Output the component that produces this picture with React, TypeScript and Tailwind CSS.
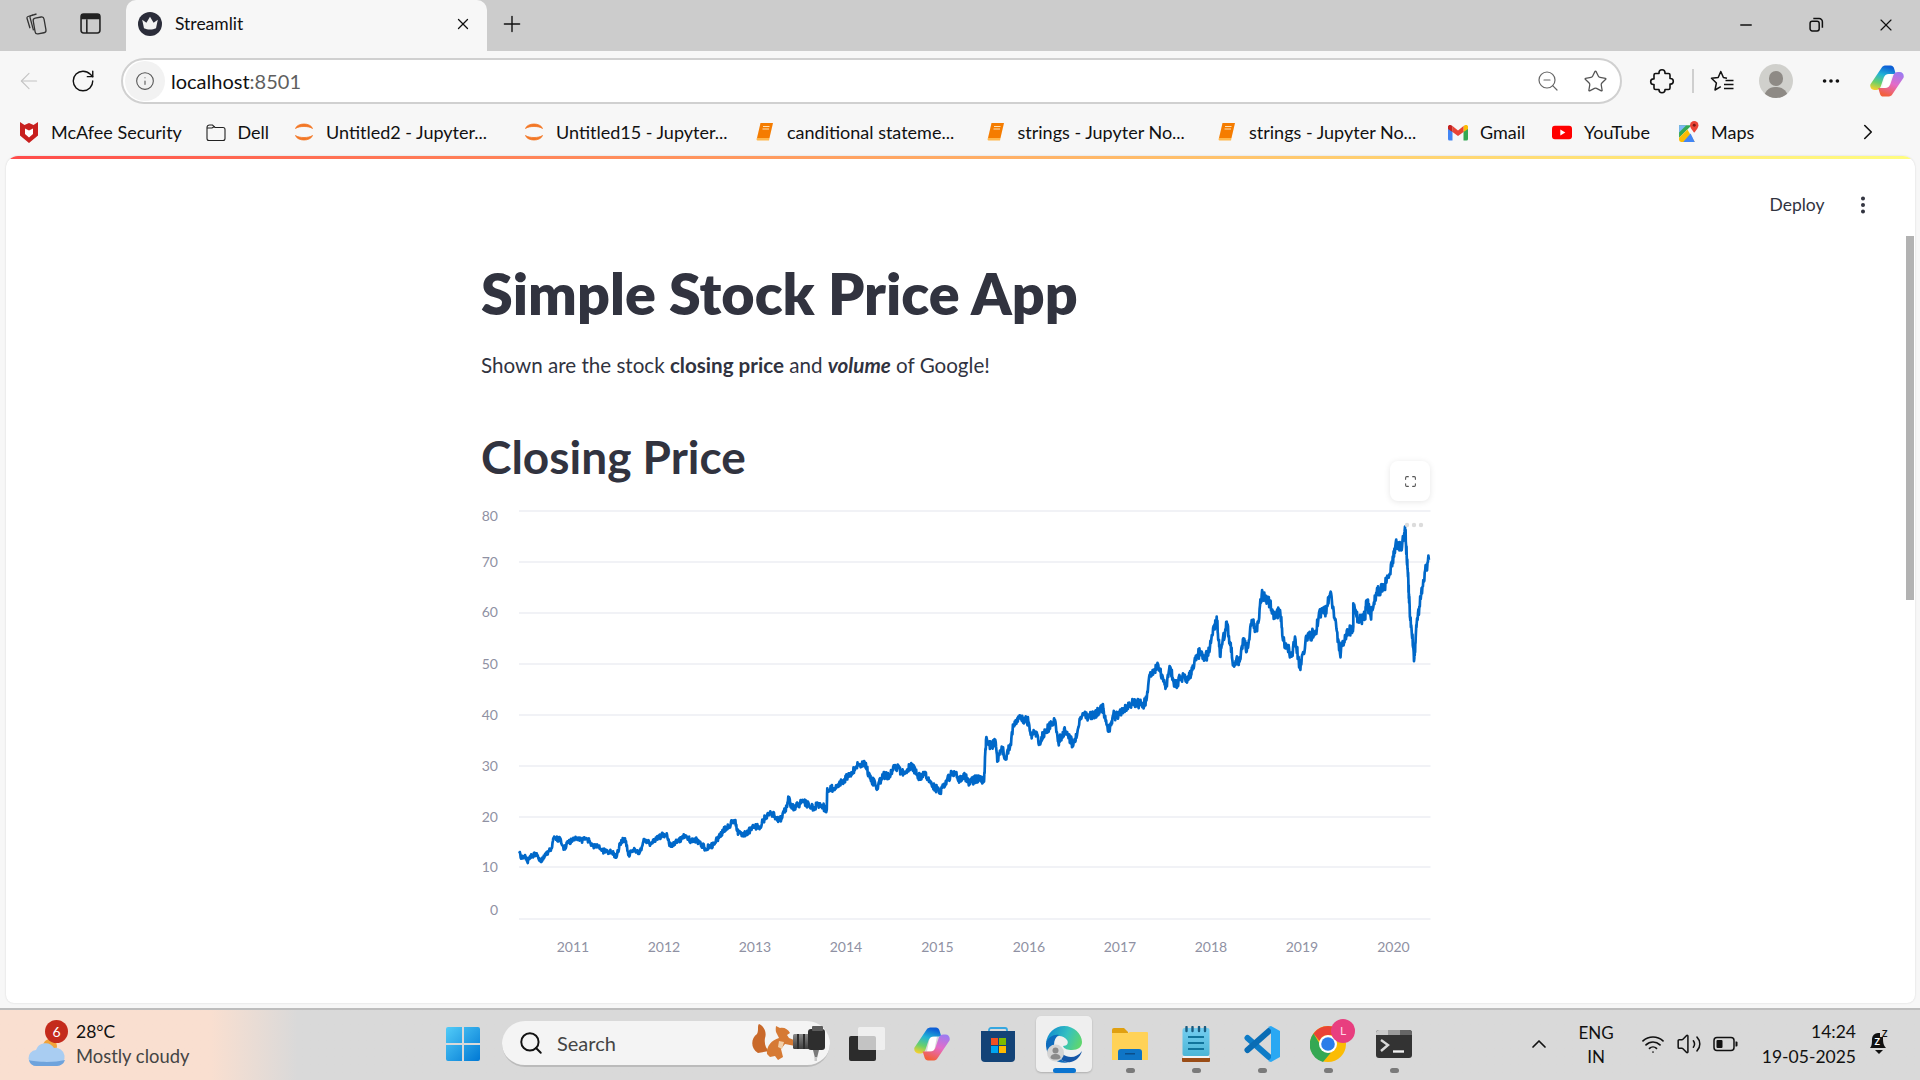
import { ArrowLeft, RotateCw, Info, ZoomOut, Star, MoreHorizontal, ChevronRight, ChevronUp, Search, Wifi, Volume2, X, Plus, Minus, MoreVertical, Maximize } from 'lucide-react';

const bodyFont = "font-['Lato','Liberation_Sans',sans-serif]";

// traced from the reference crops
const leftTrace = [
  [148, 1120], [155, 1135], [165, 1125], [172, 1145], [185, 1128], [200, 1120], [212, 1145], [228, 1125], [245, 1105], [250, 1075],
  [270, 1078], [282, 1105], [295, 1088], [318, 1075], [335, 1082], [350, 1075], [370, 1098], [385, 1100], [395, 1112], [420, 1115],
  [440, 1130], [450, 1090], [465, 1075], [475, 1125], [490, 1110], [510, 1115], [520, 1085], [545, 1090], [560, 1075], [590, 1060],
  [600, 1095], [625, 1080], [645, 1068], [660, 1080], [680, 1080], [705, 1105], [730, 1095], [760, 1052], [795, 1020], [800, 1050],
  [815, 1068], [850, 1042], [870, 1040], [885, 1012], [905, 1000], [930, 1020], [950, 980], [955, 950], [965, 985], [1000, 965],
  [1030, 985], [1050, 970], [1070, 990], [1072, 925], [1090, 925], [1140, 885], [1165, 855], [1185, 850], [1200, 895], [1222, 920],
  [1240, 885], [1255, 890], [1275, 855], [1295, 880], [1325, 855], [1345, 890], [1365, 885], [1385, 915], [1410, 935], [1430, 900],
  [1450, 875], [1470, 900],
];
const rightTrace = [
  [0, 960], [12, 945], [25, 965], [60, 955], [72, 965], [78, 840], [95, 860], [105, 840], [112, 905], [125, 860], [135, 895], [150, 860],
  [160, 795], [180, 775], [205, 785], [215, 835], [225, 815], [238, 845], [255, 815], [285, 780], [295, 845], [315, 810], [340, 855],
  [360, 780], [372, 765], [395, 770], [430, 745], [445, 815], [460, 765], [475, 770], [490, 745], [520, 725], [540, 735], [555, 730],
  [570, 645], [595, 615], [618, 680], [630, 620], [645, 680], [665, 650], [685, 660], [710, 585], [725, 575], [735, 600], [750, 560],
  [770, 470], [780, 590], [800, 485], [820, 610], [840, 600], [850, 535], [860, 575], [875, 480], [890, 510], [905, 405], [925, 420],
  [945, 475], [960, 450], [970, 540], [995, 590], [1005, 530], [1020, 625], [1040, 530], [1065, 520], [1085, 445], [1095, 460],
  [1112, 395], [1125, 480], [1140, 580], [1155, 525], [1180, 500], [1180, 430], [1195, 480], [1215, 470], [1220, 420], [1232, 470],
  [1250, 400], [1270, 385], [1290, 340], [1310, 250], [1325, 270], [1335, 200], [1343, 330], [1350, 470], [1363, 595], [1370, 490],
  [1378, 440], [1390, 360], [1408, 290],
];

function buildPricePath() {
  const pts: number[][] = [
    ...leftTrace.map(([x, y]) => [470 + x / 3 - 519, 480 + y / 3 - 500]),
    ...rightTrace.map(([x, y]) => [960 + x / 3 - 519, 460 + y / 3 - 500]),
  ];
  // seeded wobble so the line reads as daily prices
  let seed = 17;
  const rnd = () => {
    seed = (seed * 16807) % 2147483647;
    return seed / 2147483647 - 0.5;
  };
  let d = '';
  for (let i = 0; i < pts.length - 1; i++) {
    const [x0, y0] = pts[i];
    const [x1, y1] = pts[i + 1];
    const steps = Math.max(1, Math.round(Math.max(Math.abs(x1 - x0) / 0.45, Math.abs(y1 - y0) / 3)));
    for (let s = 0; s < steps; s++) {
      const t = s / steps;
      const amp = 4.5 + (Math.max(x0, 0) / 911) * 8;
      const x = x0 + (x1 - x0) * t;
      const y = y0 + (y1 - y0) * t + (s === 0 ? 0 : rnd() * amp);
      d += `${d ? 'L' : 'M'}${x.toFixed(1)} ${y.toFixed(1)}`;
    }
  }
  return d;
}

const gridTicks = [
  { label: '80', y: 11, labelY: 17 },
  { label: '70', y: 62, labelY: 63 },
  { label: '60', y: 113, labelY: 113 },
  { label: '50', y: 164, labelY: 164.5 },
  { label: '40', y: 215, labelY: 215.5 },
  { label: '30', y: 266, labelY: 266.5 },
  { label: '20', y: 317, labelY: 317.5 },
  { label: '10', y: 367, labelY: 367.5 },
  { label: '0', y: 419, labelY: 411 },
];
const years = [
  { label: '2011', x: 54 },
  { label: '2012', x: 145 },
  { label: '2013', x: 236 },
  { label: '2014', x: 327 },
  { label: '2015', x: 418.5 },
  { label: '2016', x: 510 },
  { label: '2017', x: 601 },
  { label: '2018', x: 692 },
  { label: '2019', x: 783 },
  { label: '2020', x: 874.5 },
];

function StockChart() {
  return (
    <svg width="990" height="470" viewBox="-38 0 990 470" className="block">
      {gridTicks.map((t) => (
        <line key={t.label} x1="0" x2="911.5" y1={t.y} y2={t.y} stroke="#eceef3" strokeWidth="1.3" />
      ))}
      {gridTicks.map((t) => (
        <text key={t.label} x="-21" y={t.labelY + 0.5} textAnchor="end" fontSize="14" fill="#8f91a3" fontFamily="Lato, sans-serif" dominantBaseline="middle">
          {t.label}
        </text>
      ))}
      {years.map((y) => (
        <text key={y.label} x={y.x} y="452" textAnchor="middle" fontSize="14" fill="#8f91a3" fontFamily="Lato, sans-serif">
          {y.label}
        </text>
      ))}
      <path d={buildPricePath()} fill="none" stroke="#0068c9" strokeWidth="2.7" strokeLinejoin="round" />
      <circle cx="888" cy="25" r="2.2" fill="#dcdcdc" />
      <circle cx="895" cy="25" r="2.2" fill="#dcdcdc" />
      <circle cx="902" cy="25" r="2.2" fill="#dcdcdc" />
    </svg>
  );
}

function CollectionsIcon() {
  return (
    <svg width="24" height="24" viewBox="0 0 24 24" fill="none" stroke="#333" strokeWidth="1.3">
      <path d="M9 3 4 4.500a1.500 1.500 0 0 0-1 1.800l3 10" />
      <path d="M12.500 2 7 3.500A1.500 1.500 0 0 0 6 5.300l3.500 13" />
      <rect x="10" y="5.500" width="11" height="16" rx="2.500" transform="rotate(-10 15 13)" />
    </svg>
  );
}

function TabsIcon() {
  return (
    <svg width="21" height="21" viewBox="0 0 20 20" fill="none">
      <rect x="1" y="1" width="18" height="18" rx="2.500" stroke="#222" strokeWidth="1.500" />
      <path d="M1 3.500A2.500 2.500 0 0 1 3.500 1h13A2.500 2.500 0 0 1 19 3.500V6H1z" fill="#222" />
      <path d="M6.500 6v13" stroke="#222" strokeWidth="1.500" />
    </svg>
  );
}

function StreamlitFavicon() {
  return (
    <svg width="24" height="24" viewBox="0 0 20 20" className="shrink-0">
      <circle cx="10" cy="10" r="10" fill="#2b2d3a" />
      <path d="M3.500 6.500 7 9l3-5 3 5 3.500-2.500L15 13.500c-3 1.500-7 1.500-10 0z" fill="#f3f3f3" />
    </svg>
  );
}

function RestoreIcon() {
  return (
    <svg width="15" height="15" viewBox="0 0 14 14" fill="none" stroke="#111" strokeWidth="1.400">
      <rect x="1" y="4" width="8.500" height="9" rx="2" />
      <path d="M4 1.500h5.500a3 3 0 0 1 3 3V10" />
    </svg>
  );
}

function ExtensionsIcon() {
  return (
    <svg width="26" height="26" viewBox="0 0 26 26" fill="none" stroke="#111" strokeWidth="1.600" strokeLinejoin="round">
      <path d="M10 5.500V4.800a3 3 0 0 1 6 0v.700h3.500a1.500 1.500 0 0 1 1.500 1.500v3.500h.500a2.800 2.800 0 0 1 0 5.600H21v3.900a1.500 1.500 0 0 1-1.500 1.500H16v.300a3 3 0 0 1-6 0v-.300H6.500A1.500 1.500 0 0 1 5 20v-3.500h-.500a2.800 2.800 0 0 1 0-5.600H5V7a1.500 1.500 0 0 1 1.500-1.500z" />
    </svg>
  );
}

function FavoritesIcon() {
  return (
    <svg width="24" height="24" viewBox="0 0 24 24" fill="none" stroke="#111" strokeWidth="1.500" strokeLinejoin="round">
      <path d="M17 9.200 13.400 8.500 10.800 2.500 8.200 8.500 1.500 9.300 6.400 14 5 21l5.800-3.300" />
      <path d="M15.500 11.500h8M14 15.500h9.500M14 19.500h9.500" />
    </svg>
  );
}

function McAfeeIcon() {
  return (
    <svg width="20" height="24" viewBox="0 0 18 24">
      <path d="M0 2 4.500 5 9 3l4.500 2L18 2v13.500L9 23 0 15.500z" fill="#c8201f" />
      <path d="M5 8.500 9 10.500l4-2v5.500L9 17.500 5 14z" fill="#fff" />
    </svg>
  );
}

function FolderIcon() {
  return (
    <svg width="24" height="21" viewBox="0 0 20 18" fill="none" stroke="#222" strokeWidth="1.100">
      <path d="M1 4a2.500 2.500 0 0 1 2.500-2.500h3L9 4h8a2 2 0 0 1 2 2v9a2 2 0 0 1-2 2H3a2 2 0 0 1-2-2z" />
      <path d="M1 4.500 6 4.500 8.500 3" />
    </svg>
  );
}

function JupyterIcon() {
  return (
    <svg width="24" height="24" viewBox="0 0 20 24" fill="none">
      <path d="M1.500 8.500C3.500 2.500 16.500 2.500 18.500 8.500 15 5.800 5 5.800 1.500 8.500z" fill="#f37726" stroke="#f37726" strokeWidth="0.800" />
      <path d="M1.500 15.500C3.500 21.500 16.500 21.500 18.500 15.500 15 18.200 5 18.200 1.500 15.500z" fill="#f37726" stroke="#f37726" strokeWidth="0.800" />
    </svg>
  );
}

function BookIcon() {
  return (
    <svg width="20" height="20" viewBox="0 0 18 20">
      <path d="M4.500 1h12.500l-3.500 15H1z" fill="#f57c00" />
      <path d="M1 16h12.500l-.5 2.500H1.500A1.500 1.500 0 0 1 1 16z" fill="#ffb74d" />
      <path d="M7 4.500h6.500M6.500 7h6.500" stroke="#ffe0b2" strokeWidth="1.200" />
    </svg>
  );
}

function GmailIcon() {
  return (
    <svg width="21" height="17" viewBox="0 0 20 16">
      <path d="M0 2v12.500A1.500 1.500 0 0 0 1.500 16H4.500V7z" fill="#4285f4" />
      <path d="M20 2v12.500a1.500 1.500 0 0 1-1.500 1.500H15.500V7z" fill="#34a853" />
      <path d="M15.500 1.500V7.500L20 4.500V2C20 0.500 18 0 16.800 0.800z" fill="#fbbc04" />
      <path d="M4.500 7.500V1.500L10 6 15.500 1.500V7.500L10 11.500z" fill="#ea4335" />
      <path d="M0 2C0 0.500 2 0 3.200 0.800L4.500 1.500V7.500L0 4.500z" fill="#c5221f" />
    </svg>
  );
}

function YouTubeIcon() {
  return (
    <svg width="24" height="17" viewBox="0 0 24 17">
      <rect width="24" height="16" y="0.500" rx="3.500" fill="#ff0000" />
      <path d="M10 5l6 3.500-6 3.500z" fill="#fff" />
    </svg>
  );
}

function MapsIcon() {
  return (
    <svg width="22" height="22" viewBox="0 0 19 21">
      <path d="M0 4h12l-12 12z" fill="#34a853" />
      <path d="M0 16 8 8l7 12H2a2 2 0 0 1-2-2z" fill="#fbbc04" />
      <path d="M4 20 11 12l4 8z" fill="#4285f4" />
      <path d="M0 4h7L0 11z" fill="#7cb6f5" />
      <path d="M14.500 0a4 4 0 0 1 4 4c0 3-4 7-4 7s-4-4-4-7a4 4 0 0 1 4-4z" fill="#ea4335" />
      <circle cx="14.500" cy="4" r="1.400" fill="#7c1a14" />
    </svg>
  );
}

function CopilotIcon({ id, size }: { id: string; size: number }) {
  return (
    <svg width={size} height={size} viewBox="0 0 36 33">
      <defs>
        <linearGradient id={`${id}a`} x1="0.5" y1="0" x2="0.2" y2="1">
          <stop offset="0" stopColor="#0d5fd6" />
          <stop offset="0.35" stopColor="#22b3d6" />
          <stop offset="0.7" stopColor="#6ad06a" />
          <stop offset="1" stopColor="#f7d02c" />
        </linearGradient>
        <linearGradient id={`${id}b`} x1="0.8" y1="0" x2="0.4" y2="1">
          <stop offset="0" stopColor="#9a7bf2" />
          <stop offset="0.5" stopColor="#e46bc8" />
          <stop offset="1" stopColor="#f2603c" />
        </linearGradient>
      </defs>
      <path d="M16 9h7l-3 15h-7z" fill="#fff" />
      <path d="M13 1.500C14 .5 15.500 0 17 0h5c1.500 0 2.800 1 3.300 2.500l2 6.500L20 9c-3 0-4.500 1.500-5.500 4l-3 9c-.8 2.500-2.500 4-5 4H4.500C1.500 26-.5 23 .5 20z" fill={`url(#${id}a)`} />
      <path d="M23 31.500C22 32.500 20.500 33 19 33h-5c-1.500 0-2.800-1-3.300-2.500l-2-6.500L16 24c3 0 4.500-1.500 5.500-4l3-9c.8-2.500 2.500-4 5-4h2c3 0 5 3 4 6z" fill={`url(#${id}b)`} />
    </svg>
  );
}

function WindowsLogo() {
  return (
    <svg width="36" height="36" viewBox="0 0 36 36">
      <defs>
        <linearGradient id="win" x1="0" y1="0" x2="1" y2="1">
          <stop offset="0" stopColor="#52ccf8" />
          <stop offset="1" stopColor="#0078d4" />
        </linearGradient>
      </defs>
      <path d="M1 3a2 2 0 0 1 2-2h14v16H1zM19 1h14a2 2 0 0 1 2 2v14H19zM1 19h16v16H3a2 2 0 0 1-2-2zM19 19h16v14a2 2 0 0 1-2 2H19z" fill="url(#win)" />
    </svg>
  );
}

function SquirrelCamera() {
  return (
    <svg width="74" height="38" viewBox="0 0 74 38">
      <defs>
        <linearGradient id="lens" x1="0" y1="0" x2="0" y2="1">
          <stop offset="0" stopColor="#8a8a8a" />
          <stop offset="1" stopColor="#3f3f3f" />
        </linearGradient>
      </defs>
      <path d="M6 29C-2 24-1 14 5 10 7 6 5 2 7 0c5 2 8 8 6 14-1 6 1 11 4 13z" fill="#c9692a" />
      <path d="M15 30c-1-8 5-14 12-16l-2-4c-2-3-1-7-1-8l4 2c4-1 8 1 10 5l-3 2 2 3 5 2 1 6-10-2-4 5 2 8-5 3-3-4-5 1z" fill="#d67a34" />
      <path d="M27 17l5 1-2 7-4-2z" fill="#f2cfa8" />
      <rect x="41" y="10" width="17" height="15" rx="1.500" fill="url(#lens)" />
      <rect x="45" y="10" width="2" height="15" fill="#2d2d2d" />
      <rect x="51" y="10" width="2" height="15" fill="#2d2d2d" />
      <rect x="56" y="5" width="17" height="21" rx="3" fill="#2e2e2e" />
      <rect x="60" y="2" width="11" height="5" rx="1" fill="#5c5c5c" />
      <path d="M61 26h6l-2 8h-2z" fill="#7a7a7a" />
      <rect x="62.500" y="33" width="2.500" height="4" fill="#c8c8c8" />
    </svg>
  );
}

function TaskViewIcon() {
  return (
    <svg width="36" height="34" viewBox="0 0 36 34">
      <rect x="0" y="9" width="27" height="25" rx="2" fill="#2c2c2c" />
      <rect x="9" y="0" width="27" height="23" rx="1.500" fill="#f5f5f5" fillOpacity="0.75" />
    </svg>
  );
}

function StoreIcon() {
  return (
    <svg width="36" height="36" viewBox="0 0 36 36">
      <path d="M9 7V4a2 2 0 0 1 2-2h14a2 2 0 0 1 2 2v3" fill="none" stroke="#35a7e0" strokeWidth="1.800" />
      <path d="M1 5h34v27a4 4 0 0 1-4 4H5a4 4 0 0 1-4-4z" fill="#134377" />
      <rect x="11" y="12" width="7" height="7" fill="#f25022" />
      <rect x="19" y="12" width="7" height="7" fill="#7fba00" />
      <rect x="11" y="20" width="7" height="7" fill="#00a4ef" />
      <rect x="19" y="20" width="7" height="7" fill="#ffb900" />
    </svg>
  );
}

function EdgeIcon() {
  return (
    <svg width="36" height="37" viewBox="0 0 36 37">
      <defs>
        <linearGradient id="edgeA" x1="0" y1="0.3" x2="1" y2="0.6">
          <stop offset="0" stopColor="#0f8ad0" />
          <stop offset="0.55" stopColor="#35c1c0" />
          <stop offset="1" stopColor="#5fd66e" />
        </linearGradient>
      </defs>
      <path d="M0 17C1 7 9 0 18 0c10 0 18 8 18 16 0 5-4 8-10 8-4 0-8-1-9-4 4 0 6-3 4-6-3-4-8-5-12-3-4 1-7 3-9 6z" fill="url(#edgeA)" />
      <path d="M0 17c2-6 8-9 13-8-5 3-6 9-4 16 2 7 9 12 15 11C14 39-1 33 0 17z" fill="#0f6cbd" />
      <path d="M14 22c0 5 5 9 11 9 4 0 8-2 11-6-2 7-8 12-15 11-4 0-8-4-9-9z" fill="#1557a8" />
      <circle cx="9.500" cy="27" r="8.500" fill="#d4d4d4" />
      <circle cx="9.500" cy="24.500" r="3" fill="#8a8a8a" />
      <path d="M4.500 32c0-3 2-4 5-4s5 1 5 4c-2 2-8 2-10 0z" fill="#8a8a8a" />
    </svg>
  );
}

function ExplorerIcon() {
  return (
    <svg width="36" height="32" viewBox="0 0 36 32">
      <path d="M0 2a2 2 0 0 1 2-2h10l4 4v3H0z" fill="#e0a010" />
      <path d="M0 5h16l2-1h17a1 1 0 0 1 1 1v27H0z" fill="#ffd257" />
      <path d="M6 24a3 3 0 0 1 3-3h18a3 3 0 0 1 3 3v8H6z" fill="#0f75c6" />
      <rect x="13" y="25" width="10" height="1.500" fill="#0b4f8a" />
    </svg>
  );
}

function NotepadIcon() {
  return (
    <svg width="28" height="36" viewBox="0 0 28 36">
      <defs>
        <linearGradient id="pad" x1="0" y1="0" x2="0" y2="1">
          <stop offset="0" stopColor="#74cdf0" />
          <stop offset="1" stopColor="#4cb6d6" />
        </linearGradient>
      </defs>
      <rect x="0.500" y="2" width="27" height="28" rx="2" fill="url(#pad)" />
      <path d="M0 32h28v3a1 1 0 0 1-1 1H1a1 1 0 0 1-1-1z" fill="#9a4d17" />
      <path d="M1 30h26v2H1z" fill="#f4f4f4" />
      <path d="M4.500 1v4M10.500 1v4M17 1v4M23 1v4" stroke="#1a5c80" strokeWidth="2.400" strokeLinecap="round" />
      <path d="M6 11h16M6 17h16M6 23h16" stroke="#11749c" strokeWidth="1.800" />
    </svg>
  );
}

function VsCodeIcon() {
  return (
    <svg width="36" height="36" viewBox="0 0 36 36" fill="none">
      <path d="M3.500 12 25 31" stroke="#0e7cc7" strokeWidth="6" strokeLinecap="round" />
      <path d="M25 5 3.500 24" stroke="#0a6db5" strokeWidth="6" strokeLinecap="round" />
      <path d="M24 1 27 0l9 5v26l-9 5-3-1 3-3V4z" fill="#2aa8f3" />
    </svg>
  );
}

function ChromeIcon() {
  return (
    <svg width="36" height="36" viewBox="0 0 36 36">
      <circle cx="18" cy="18" r="18" fill="#fbbc04" />
      <path d="M18 0a18 18 0 0 1 15.600 9H18a9 9 0 0 0-8.500 6L3.500 7.500A18 18 0 0 1 18 0z" fill="#ea4335" />
      <path d="M3.500 7.500 11 20a8 8 0 0 0 10 6.500L13 36A18 18 0 0 1 3.500 7.500z" fill="#34a853" />
      <circle cx="18" cy="18" r="9" fill="#fff" />
      <circle cx="18" cy="18" r="6.800" fill="#2b7de9" />
    </svg>
  );
}

function TerminalIcon() {
  return (
    <svg width="36" height="28" viewBox="0 0 36 28">
      <rect x="0" y="0" width="36" height="28" rx="3" fill="#333" />
      <path d="M0 5V3a3 3 0 0 1 3-3h9v5z" fill="#c9c9c9" />
      <path d="M12 0h12v5H12z" fill="#9b9b9b" />
      <path d="M24 0h9a3 3 0 0 1 3 3v2H24z" fill="#666" />
      <path d="M5 10l7 5-7 6" fill="none" stroke="#d9d9d9" strokeWidth="2.400" />
      <path d="M17 21.500h11" stroke="#f0f0f0" strokeWidth="2.400" />
    </svg>
  );
}

function CloudIcon() {
  return (
    <svg width="38" height="30" viewBox="0 0 38 30">
      <circle cx="22" cy="9" r="7" fill="#f2a33a" />
      <path d="M9 29a8 8 0 0 1-1-16 10 10 0 0 1 18-2 9 9 0 0 1 3 18z" fill="#a9cdf2" />
      <path d="M9 29a8 8 0 0 1-8-6c5 2 25 3 36 0a9 9 0 0 1-8 6z" fill="#6ea3dc" />
    </svg>
  );
}

function BatteryIcon() {
  return (
    <svg width="26" height="16" viewBox="0 0 26 16" fill="none">
      <rect x="1" y="1.500" width="20" height="13" rx="3" stroke="#111" strokeWidth="1.500" />
      <rect x="3.500" y="4" width="6" height="8" rx="1" fill="#111" />
      <path d="M22.500 5.500h1a1 1 0 0 1 1 1v3a1 1 0 0 1-1 1h-1z" fill="#111" />
    </svg>
  );
}

function BellSnooze() {
  return (
    <svg width="24" height="28" viewBox="0 0 24 28">
      <path d="M3 20c2-2 2-6 2-9a6 6 0 0 1 6-6h2v4h3c0 4 0 8 3 11z" fill="#111" />
      <path d="M8 22h8l-4 4z" fill="#111" />
      <text x="7.500" y="17" fontSize="9" fontWeight="700" fill="#fff" fontFamily="Lato, sans-serif">Z</text>
      <text x="15" y="9" fontSize="9" fontWeight="700" fill="#111" fontFamily="Lato, sans-serif">Z</text>
    </svg>
  );
}

const bookmarks = [
  { label: 'McAfee Security', icon: <McAfeeIcon />, w: 'w-[186.5px]' },
  { label: 'Dell', icon: <FolderIcon />, w: 'w-[88.5px]' },
  { label: 'Untitled2 - Jupyter...', icon: <JupyterIcon />, w: 'w-[230px]' },
  { label: 'Untitled15 - Jupyter...', icon: <JupyterIcon />, w: 'w-[231px]' },
  { label: 'canditional stateme...', icon: <BookIcon />, w: 'w-[230.5px]' },
  { label: 'strings - Jupyter No...', icon: <BookIcon />, w: 'w-[231.5px]' },
  { label: 'strings - Jupyter No...', icon: <BookIcon />, w: 'w-[231px]' },
  { label: 'Gmail', icon: <GmailIcon />, w: 'w-[104px]' },
  { label: 'YouTube', icon: <YouTubeIcon />, w: 'w-[127px]' },
  { label: 'Maps', icon: <MapsIcon />, w: 'w-[176px]' },
];

const pinned = [
  { icon: <CopilotIcon id="tb" size={36} />, dot: false },
  { icon: <StoreIcon />, dot: false },
  { icon: <EdgeIcon />, dot: false, active: true },
  { icon: <ExplorerIcon />, dot: true },
  { icon: <NotepadIcon />, dot: true },
  { icon: <VsCodeIcon />, dot: true },
  { icon: <ChromeIcon />, dot: true, badge: true },
  { icon: <TerminalIcon />, dot: true },
];

export default function App() {
  return (
    <div className={`w-[1920px] h-[1080px] overflow-hidden flex flex-col bg-[#f7f7f7] text-[#111] ${bodyFont}`}>
      {/* tab strip */}
      <div className="h-[51px] pb-[4px] bg-[#cccccc] flex items-center shrink-0">
        <div className="w-[72px] flex justify-center"><CollectionsIcon /></div>
        <div className="w-[54px] flex justify-center -ml-[9px]"><TabsIcon /></div>
        <div className="ml-[9px] w-[361px] h-[51px] pb-[4px] self-start bg-[#f7f7f7] rounded-t-[10px] flex items-center pl-[11.5px] pr-[15px]">
          <StreamlitFavicon />
          <span className="ml-[13.5px] text-[17.5px] flex-1 mt-[1px]">Streamlit</span>
          <X size={18} strokeWidth={1.7} />
        </div>
        <Plus size={26} strokeWidth={1.3} className="ml-[12px]" />
        <div className="ml-auto flex items-center mt-[2px]">
          <div className="w-[68px] flex justify-center"><Minus size={18} strokeWidth={1.8} /></div>
          <div className="w-[68px] flex justify-center ml-[2px]"><RestoreIcon /></div>
          <div className="w-[68px] flex justify-center ml-[2px]"><X size={20} strokeWidth={1.4} /></div>
        </div>
      </div>

      {/* address bar */}
      <div className="h-[60px] flex items-center shrink-0">
        <ArrowLeft size={26} strokeWidth={1} className="ml-[16px] text-[#c4c4c4]" />
        <RotateCw size={26} strokeWidth={1.3} className="ml-[28px]" />
        <div className="ml-[25px] w-[1501px] h-[46px] rounded-full bg-white border-2 border-[#d0d0d0] flex items-center pl-[1.5px] pr-[12px]">
          <div className="w-[40px] h-[40px] rounded-full bg-[#f2f2f2] flex items-center justify-center">
            <Info size={20} strokeWidth={1.3} className="text-[#555]" />
          </div>
          <span className="ml-[6.5px] text-[20px]">localhost<span className="text-[#5f5f5f]">:8501</span></span>
          <ZoomOut size={24} strokeWidth={1.2} className="ml-auto text-[#666]" />
          <Star size={25} strokeWidth={1.2} className="ml-[23px] text-[#555]" />
        </div>
        <div className="ml-[27px]"><ExtensionsIcon /></div>
        <div className="ml-[17px] w-[1.5px] h-[24px] bg-[#cfcfcf]" />
        <div className="ml-[16.5px]"><FavoritesIcon /></div>
        <div className="ml-[25px] w-[34px] h-[34px] rounded-full bg-[#d0d0cc] flex flex-col items-center justify-end overflow-hidden">
          <div className="w-[14px] h-[15px] rounded-full bg-[#8e8a85] mb-[1px]" />
          <div className="w-[24px] h-[11px] rounded-t-full bg-[#8e8a85]" />
        </div>
        <MoreHorizontal size={22} strokeWidth={2} className="ml-[27px]" />
        <div className="ml-[28px]"><CopilotIcon id="tool" size={34} /></div>
      </div>

      {/* bookmarks */}
      <div className="h-[45px] pb-[3px] flex items-center pl-[19px] shrink-0 text-[18px]">
        {bookmarks.map((b, i) => (
          <div key={i} className={`flex items-center ${b.w} whitespace-nowrap shrink-0`}>
            <span className="w-[20px] shrink-0 flex items-center justify-center">{b.icon}</span>
            <span className="ml-[12px]">{b.label}</span>
          </div>
        ))}
        <ChevronRight size={26} strokeWidth={1.5} className="shrink-0" />
      </div>

      {/* page */}
      <div className="ml-[6px] mr-[5px] h-[847px] rounded-t-[12px] rounded-b-[8px] bg-white relative overflow-hidden shadow-[0_0_2px_rgba(0,0,0,0.15)] shrink-0">
        <div className="h-[3px] bg-gradient-to-r from-[#ff4b4b] to-[#fffd80]" />
        <div className="absolute right-[41.5px] top-[37.5px] flex items-center text-[#31333f]">
          <span className="text-[17.5px] leading-[22px]">Deploy</span>
          <MoreVertical size={22} strokeWidth={2.4} className="ml-[27px]" />
        </div>
        <div className="absolute right-[1px] top-[80px] w-[8px] h-[364px] bg-[#b2b2b2]" />
        <div className="ml-[475px] w-[990px] text-[#31333f]">
          <h1 className="pt-[99px] text-[57.4px] leading-[70px] font-extrabold">Simple Stock Price App</h1>
          <p className="mt-[21px] text-[20.6px] leading-[32px]">
            Shown are the stock <strong>closing price</strong> and <strong><em>volume</em></strong> of Google!
          </p>
          <h2 className="mt-[46px] text-[46px] leading-[60px] font-bold">Closing Price</h2>
          <div className="relative mt-[13px]">
            <StockChart />
            <div className="absolute left-[909px] -top-[39px] w-[40px] h-[40px] bg-white rounded-[8px] shadow-[0_1px_6px_rgba(0,0,0,0.1)] flex items-center justify-center">
              <Maximize size={13} strokeWidth={2} className="text-[#555]" />
            </div>
          </div>
        </div>
      </div>

      {/* taskbar */}
      <div className="mt-auto h-[72px] border-t-[2px] border-[#bdbdbd] bg-[#d9d9d9] bg-gradient-to-r from-[#f9dfd0] from-[11%] to-[#d9d9d9] to-[15.5%] flex items-center relative shrink-0">
        <div className="relative ml-[28px] w-[38px] h-[44px] flex items-end"><CloudIcon />
          <span className="absolute left-[17px] -top-[3px] w-[23px] h-[23px] rounded-full bg-[#c42b1c] text-white text-[14px] flex items-center justify-center">6</span>
        </div>
        <div className="ml-[10px] text-[17.5px] leading-[24px] -mt-[2px]">
          <div>28°C</div>
          <div className="text-[18.4px] text-[#444]">Mostly cloudy</div>
        </div>
        <div className="absolute left-[445px] top-[16px]"><WindowsLogo /></div>
        <div className="absolute left-[502px] top-[11px] w-[328px] h-[46px] rounded-full bg-[#f4f4f4] border-b-2 border-[#bbb] flex items-center pl-[16px]">
          <Search size={26} strokeWidth={1.8} />
          <span className="ml-[13px] text-[20px] text-[#444]">Search</span>
          <div className="absolute right-[4px] top-[3px]"><SquirrelCamera /></div>
        </div>
        <div className="absolute left-[849px] top-[17px]"><TaskViewIcon /></div>
        <div className="absolute left-[899px] top-[4px] flex">
          {pinned.map((p, i) => (
            <div key={i} className="relative w-[66px] h-[60px] flex items-center justify-center">
              {p.active && <span className="absolute left-[5px] right-[5px] top-[2px] bottom-[2px] rounded-[5px] bg-[#efefef] shadow-[0_1px_2px_rgba(0,0,0,0.2)]" />}
              <span className="relative flex">{p.icon}</span>
              {p.dot && <span className="absolute bottom-[1px] left-[28.5px] w-[9px] h-[5px] rounded-full bg-[#7a7a7a]" />}
              {p.active && <span className="absolute bottom-[1px] left-[21.5px] w-[23px] h-[5px] rounded-full bg-[#0a74d0]" />}
              {p.badge && <span className="absolute left-[36px] top-[5px] w-[24px] h-[24px] rounded-full bg-[#e83e7f] text-[#ffd5e5] text-[12px] flex items-center justify-center">L</span>}
            </div>
          ))}
        </div>
        <ChevronUp size={24} strokeWidth={1.7} className="absolute left-[1527px] top-[22px]" />
        <div className="absolute left-[1577px] top-[11px] w-[38px] text-center text-[17px] leading-[24px]">ENG<br />IN</div>
        <Wifi size={24} strokeWidth={1.7} className="absolute left-[1641px] top-[22px]" />
        <Volume2 size={26} strokeWidth={1.4} className="absolute left-[1676px] top-[21px]" />
        <div className="absolute left-[1713px] top-[26px]"><BatteryIcon /></div>
        <div className="absolute right-[64px] top-[9px] text-right text-[17.5px] leading-[25px]">14:24<br />19-05-2025</div>
        <div className="absolute left-[1867px] top-[18px]"><BellSnooze /></div>
      </div>
    </div>
  );
}
